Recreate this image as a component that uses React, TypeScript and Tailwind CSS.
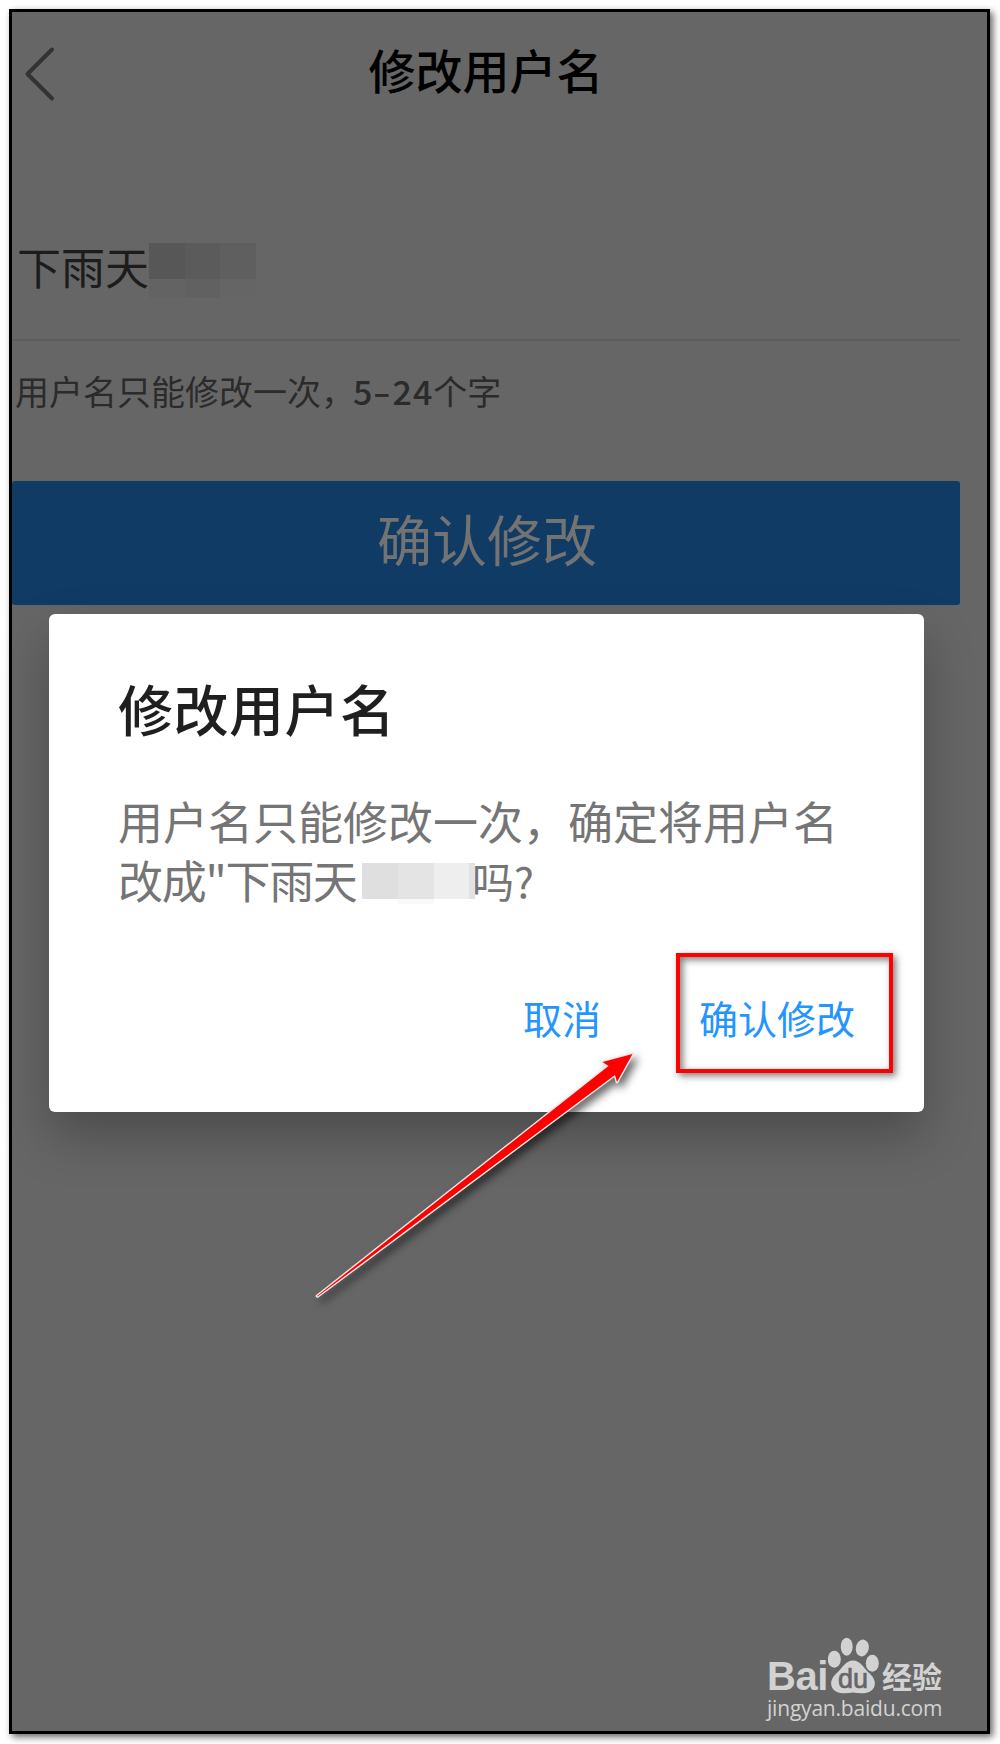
const MASK_ROWS = [
  { height: "h-9", cells: ["bg-[#575757]", "bg-[#5b5b5b]", "bg-[#5f5f5f]"] },
  { height: "h-[19px]", cells: ["bg-[#636363]", "bg-[#616161]", "bg-[#656565]"] },
];

function Header() {
  return (
    <header className="relative flex h-[122px] items-center justify-center pb-2.5">
      <button className="absolute left-[11px] top-[33px]" aria-label="返回">
        <svg width="34" height="58" viewBox="0 0 34 58" fill="none">
          <path d="M29 4.5 L4.500 29 L29 53.500" stroke="#333333" strokeWidth="4" strokeLinecap="round" strokeLinejoin="round" />
        </svg>
      </button>
      <h1 className="text-[47px] font-medium leading-none text-black">修改用户名</h1>
    </header>
  );
}

function UsernameForm() {
  return (
    <main>
      <div className="flex h-[207px] items-end border-b-2 border-[#5d5d5d] pl-[5px]">
        <span className="mb-[51px] w-[132px] whitespace-nowrap text-[44px] leading-none text-[#1c1c1c]">下雨天</span>
        <div className="mb-[41px] w-[107px]">
          {MASK_ROWS.map((row) => (
            <div key={row.height} className="grid grid-cols-3">
              {row.cells.map((cell) => (
                <div key={cell} className={`${row.height} ${cell}`} />
              ))}
            </div>
          ))}
        </div>
      </div>
      <p className="mt-[33px] flex h-[34px] items-center whitespace-nowrap pl-[3px] text-[34px] leading-none text-[#2b2b2b]">
        用户名只能修改一次，
        <span className="-ml-0.5 font-medium tracking-[1px]">
          5<span className="mx-[3px] inline-block scale-x-150">-</span>24
        </span>
        个字
      </p>
      <button className="mt-[73px] flex h-[124px] w-full items-center justify-center rounded-[3px] bg-[#0f3b65] pb-3 pl-0.5 text-[55px] leading-none text-[#737373]">
        确认修改
      </button>
    </main>
  );
}

function ConfirmDialog() {
  return (
    <section className="absolute left-[37px] top-[602px] flex h-[498px] w-[875px] flex-col rounded-md bg-white px-[69px] pt-[66px] shadow-[0_24px_50px_rgba(0,0,0,0.26)]">
      <h2 className="text-[55px] font-medium leading-none tracking-[0.500px] text-[#1f1f1f]">修改用户名</h2>
      <div className="mt-14 whitespace-nowrap text-[45px] leading-[59px] text-[#757575]">
        <p>用户名只能修改一次，确定将用户名</p>
        <div className="flex items-center">
          <span className="w-[244px] tracking-[-1.300px]">改成"下雨天</span>
          <div className="relative mt-[3px] flex h-9 w-[113px]">
            <div className="w-9 bg-[#dfdfdf]" />
            <div className="w-9 bg-[#e4e4e4]" />
            <div className="w-[35px] bg-[#eeeeee]" />
            <div className="w-1.5 bg-[#e2e2e2]" />
            <div className="absolute left-9 top-9 h-[5px] w-9 bg-[#f9f9f9]" />
          </div>
          <span className="-ml-[3px] text-[42px]">吗?</span>
        </div>
      </div>
      <div className="mt-11 flex h-[120px] items-center justify-end text-[39px] leading-none text-[#2395ff]">
        <button className="mr-[75px] pt-2">取消</button>
        <button className="-mr-[38px] h-full w-[217px] border-4 border-[#ff0000] pl-[3px] pt-2 text-left shadow-[3px_3px_7px_rgba(0,0,0,0.5),inset_3px_3px_7px_rgba(0,0,0,0.5)]">
          <span className="ml-4">确认修改</span>
        </button>
      </div>
    </section>
  );
}

function PointerArrow() {
  return (
    <svg className="absolute left-[289px] top-[1018px] drop-shadow-[4px_5px_4px_rgba(0,0,0,0.6)]" width="350" height="280" viewBox="300 1030 350 280" fill="none">
      <path
        d="M316 1296 L607.500 1066 L601.500 1062 L631.500 1054 L616 1082 L614 1075 L316.500 1296.500 Z"
        fill="#ff0000"
        stroke="#f1e9e9"
        strokeWidth="2.800"
        strokeLinejoin="round"
        paintOrder="stroke"
      />
    </svg>
  );
}

function Watermark() {
  return (
    <div className="absolute bottom-[11px] right-10 w-[180px] text-[#d2d2d2]">
      <div className="flex h-[56px] items-start">
        <span className="mt-6 w-[61px] font-['Liberation_Sans'] text-[40px] font-bold leading-[32px] tracking-[-0.500px]">Bai</span>
        <svg width="51" height="58" viewBox="829 1636 51 58" fill="currentColor">
          <ellipse cx="835.300" cy="1659.300" rx="6.500" ry="8.500" />
          <ellipse cx="847.700" cy="1646.700" rx="6" ry="9" />
          <ellipse cx="863.300" cy="1648" rx="6.500" ry="8.500" transform="rotate(12 863.300 1648)" />
          <ellipse cx="873.300" cy="1663.300" rx="6.500" ry="8.500" />
          <path d="M854 1660.500 C861 1660.500 865 1668 869 1672 C874 1676 877 1681 875.500 1686 C873 1694 863 1694 854 1692.500 C845 1694 835 1694 832.500 1686 C831 1681 834 1676 839 1672 C843 1668 847 1660.500 854 1660.500 Z" />
          <text x="854" y="1688" textAnchor="middle" fontFamily="Liberation Sans" fontSize="27" fill="#666666" stroke="#666666" strokeWidth="0.700">du</text>
        </svg>
        <span className="mt-[23px] pl-[3px] text-[30px] font-bold leading-[32px]">经验</span>
      </div>
      <div className="mt-1 whitespace-nowrap font-['Open_Sans'] text-[21px] font-medium leading-[24px] tracking-[-0.200px]">jingyan.baidu.com</div>
    </div>
  );
}

export default function App() {
  return (
    <div className="h-[1744px] w-[1000px] bg-white pl-[9px] pt-[9px] font-['Noto_Sans_CJK_SC',sans-serif]">
      <div className="relative h-[1725px] w-[981px] border-[3px] border-black bg-[#666666] pr-[27px] shadow-[3px_3px_7px_rgba(0,0,0,0.6)]">
        <Header />
        <UsernameForm />
        <ConfirmDialog />
        <PointerArrow />
        <Watermark />
      </div>
    </div>
  );
}
